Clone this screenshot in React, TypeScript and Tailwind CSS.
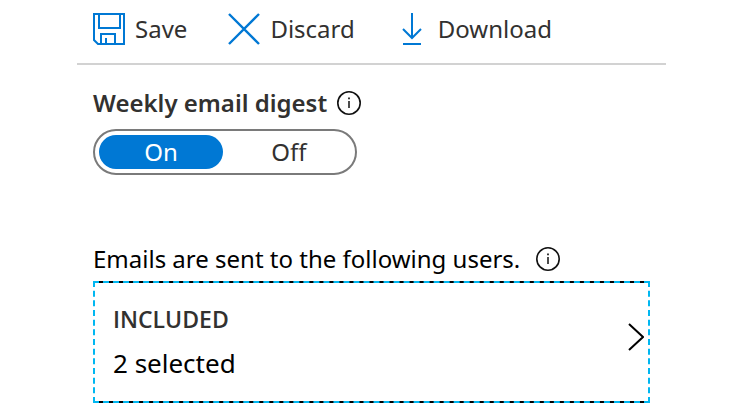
import { useState } from "react"

function SaveIcon() {
    return (
        <svg className="h-8 w-8 shrink-0" viewBox="0 0 32 32" fill="none" stroke="#0078d4" strokeWidth="2" aria-hidden="true">
            <path d="M1 1H31V31H5L1 27Z" />
            <path d="M6 1V15H27V1" />
            <path d="M8 31V21H22V31" />
            <path d="M13 31V25" />
        </svg>
    )
}

function DiscardIcon() {
    return (
        <svg className="h-8 w-8 shrink-0" viewBox="0 0 32 32" fill="none" stroke="#0078d4" strokeWidth="2.4" aria-hidden="true">
            <path d="M1 1L31 31M31 1L1 31" />
        </svg>
    )
}

function DownloadIcon() {
    return (
        <svg className="h-8 w-8 shrink-0" viewBox="0 0 32 32" fill="none" stroke="#0078d4" strokeWidth="2" aria-hidden="true">
            <path d="M16 0V25M7 16L16 25L25 16M7 31H25" />
        </svg>
    )
}

function InfoButton({ label }: { label: string }) {
    return (
        <button type="button" aria-label={label} className="shrink-0">
            <svg className="h-6 w-6" viewBox="0 0 24 24" fill="none" stroke="#111111" aria-hidden="true">
                <circle cx="12" cy="12" r="11.2" strokeWidth="1.6" />
                <path d="M12 10V17" strokeWidth="1.5" />
                <path d="M12 6.5V8.2" strokeWidth="1.7" />
            </svg>
        </button>
    )
}

export default function App() {

    const [digest, setDigest] = useState("on")

    return (
        <main className="mr-[76px] ml-[77px] font-['Noto_Sans','Open_Sans',sans-serif] text-[24px] leading-8 text-black">
            <div className="flex items-center gap-[41px] border-b-2 border-[#d2d2d2] px-4 pt-[13px] pb-[18px] text-[#323130]">
                <button type="button" className="flex items-center gap-2.5"><SaveIcon />Save</button>
                <button type="button" className="flex items-center gap-2.5"><DiscardIcon />Discard</button>
                <button type="button" className="flex items-center gap-2.5"><DownloadIcon />Download</button>
            </div>

            <div className="px-4">
                <section className="pt-[22px] text-[#323130]">
                    <div className="flex items-center gap-2.5">
                        <h2 id="digest-title" className="font-semibold">Weekly email digest</h2>
                        <InfoButton label="About the weekly email digest" />
                    </div>
                    <div role="radiogroup" aria-labelledby="digest-title" className="mt-2.5 grid w-[264px] grid-cols-2 gap-1 rounded-full border-2 border-[#7a7a7a] p-1 text-center">
                        <label className="cursor-pointer rounded-full py-px has-checked:bg-[#0078d4] has-checked:text-white">
                            <input type="radio" name="digest" value="on" className="sr-only" checked={digest === "on"} onChange={(e) => setDigest(e.target.value)} />
                            On
                        </label>
                        <label className="cursor-pointer rounded-full py-px has-checked:bg-[#0078d4] has-checked:text-white">
                            <input type="radio" name="digest" value="off" className="sr-only" checked={digest === "off"} onChange={(e) => setDigest(e.target.value)} />
                            Off
                        </label>
                    </div>
                </section>

                <section className="pt-[68px]">
                    <div className="flex items-center gap-4">
                        <p>Emails are sent to the following users.</p>
                        <InfoButton label="About the recipients" />
                    </div>
                    {/* the black rules show through the gaps of the dashed border */}
                    <div className="mt-1.5 border-y-2 border-black">
                        <button type="button" className="-my-0.5 flex w-full items-center justify-between border-2 border-dashed border-[#00b7f1] pt-5 pr-1 pb-[22px] pl-[18px] text-left">
                            <span className="flex flex-col gap-3">
                                <span className="font-['Open_Sans',sans-serif] text-[23px] font-semibold text-[#323130]">INCLUDED</span>
                                <span className="text-[26px]">2 selected</span>
                            </span>
                            <svg className="mb-2 h-7 w-4 shrink-0" viewBox="0 0 16 28" fill="none" stroke="#000000" strokeWidth="2" aria-hidden="true">
                                <path d="M1 1L15 14L1 27" />
                            </svg>
                        </button>
                    </div>
                </section>
            </div>
        </main>
    )
}
